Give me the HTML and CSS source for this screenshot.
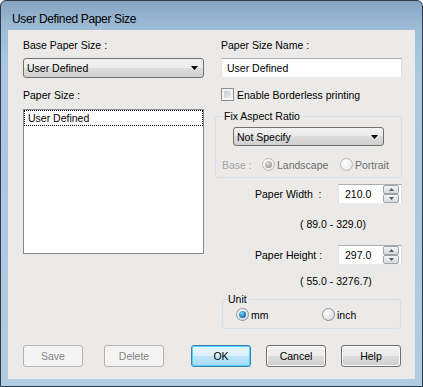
FILE: index.html
```html
<!DOCTYPE html>
<html>
<head>
<meta charset="utf-8">
<title>User Defined Paper Size</title>
<link rel="stylesheet" href="styles.css">
</head>
<body>
<div class="window">
  <div class="titlebar">User Defined Paper Size</div>
  <div class="client">
    <div class="main">
      <div class="col-left">
        <div class="label first">Base Paper Size :</div>
        <div class="combo wide">
          <span>User Defined</span>
          <svg class="arrow" width="7" height="4" viewBox="0 0 7 4"><path d="M0 0H7L3.5 4Z" fill="#000"/></svg>
        </div>
        <div class="label second">Paper Size :</div>
        <div class="listbox">
          <div class="item">User Defined</div>
        </div>
      </div>
      <div class="col-right">
        <div class="label first indent">Paper Size Name :</div>
        <div class="textbox">User Defined</div>
        <div class="check-row">
          <span class="checkbox"></span>
          <span>Enable Borderless printing</span>
        </div>
        <div class="group group-aspect">
          <div class="legend">Fix Aspect Ratio</div>
          <div class="combo narrow">
            <span>Not Specify</span>
            <svg class="arrow" width="7" height="4" viewBox="0 0 7 4"><path d="M0 0H7L3.5 4Z" fill="#000"/></svg>
          </div>
          <div class="base-row">
            <span class="base-label">Base :</span>
            <span class="radio-item landscape"><span class="radio disabled checked"></span><span>Landscape</span></span>
            <span class="radio-item"><span class="radio disabled"></span><span>Portrait</span></span>
          </div>
        </div>
        <div class="num-row row-width">
          <span class="num-label">Paper Width &nbsp;:</span>
          <div class="numbox">
            <span>210.0</span>
            <span class="spin">
              <span class="spin-btn"><svg width="5" height="3" viewBox="0 0 5 3"><path d="M0 3L2.5 0L5 3Z" fill="#4a5a78"/></svg></span>
              <span class="spin-btn"><svg width="5" height="3" viewBox="0 0 5 3"><path d="M0 0H5L2.5 3Z" fill="#4a5a78"/></svg></span>
            </span>
          </div>
        </div>
        <div class="range range-one">( 89.0 - 329.0)</div>
        <div class="num-row row-height">
          <span class="num-label">Paper Height :</span>
          <div class="numbox">
            <span>297.0</span>
            <span class="spin">
              <span class="spin-btn"><svg width="5" height="3" viewBox="0 0 5 3"><path d="M0 3L2.5 0L5 3Z" fill="#4a5a78"/></svg></span>
              <span class="spin-btn"><svg width="5" height="3" viewBox="0 0 5 3"><path d="M0 0H5L2.5 3Z" fill="#4a5a78"/></svg></span>
            </span>
          </div>
        </div>
        <div class="range range-two">( 55.0 - 3276.7)</div>
        <div class="group group-unit">
          <div class="legend legend-unit">Unit</div>
          <div class="unit-row">
            <span class="radio-item mm"><span class="radio checked"></span><span>mm</span></span>
            <span class="radio-item"><span class="radio"></span><span>inch</span></span>
          </div>
        </div>
      </div>
    </div>
    <div class="buttons">
      <div class="btn disabled">Save</div>
      <div class="btn disabled gap-delete">Delete</div>
      <div class="btn default gap-ok">OK</div>
      <div class="btn gap-small">Cancel</div>
      <div class="btn gap-small">Help</div>
    </div>
  </div>
</div>
</body>
</html>
```
FILE: styles.css
```css
* { box-sizing: border-box; }
html, body { margin: 0; padding: 0; background: #ffffff; }
body {
  font-family: "Liberation Sans", Arial, sans-serif;
  font-size: 10.5px;
  color: #000;
}

.window {
  width: 423px;
  height: 387px;
  border: 1px solid #2e3b48;
  border-radius: 6px 6px 0 0;
  background: linear-gradient(to bottom, #86a5c3 0px, #a0bdd8 29px, #abc8e0 70px, #b0cce3 100%);
  padding: 0 7px 7px 7px;
  display: flex;
  flex-direction: column;
  overflow: hidden;
}

.titlebar {
  height: 29px;
  flex: none;
  padding: 11px 0 0 4px;
  font-size: 12px;
  line-height: 14px;
  letter-spacing: -0.35px;
  color: #000;
  white-space: nowrap;
}

.client {
  flex: 1;
  background: #ebeae8;
  display: flex;
  flex-direction: column;
  padding-bottom: 12px;
}

.main { display: flex; }

.col-left {
  margin-left: 15px;
  width: 181px;
  display: flex;
  flex-direction: column;
}

.col-right {
  margin-left: 11px;
  width: 187px;
  display: flex;
  flex-direction: column;
}

.label {
  height: 13px;
  line-height: 13px;
  white-space: nowrap;
}
.first { margin-top: 9px; }
.second { margin-top: 11px; }
.indent { margin-left: 6px; }

.combo {
  border: 1px solid #707070;
  border-radius: 3px;
  background: linear-gradient(to bottom, #f2f2f2 0%, #ebebeb 50%, #dddddd 50%, #cfcfcf 100%);
  display: flex;
  align-items: center;
  padding-left: 3px;
  white-space: nowrap;
}
.combo .arrow { margin-left: auto; margin-right: 5px; }
.combo.wide { margin-top: 6px; height: 20px; }
.combo.narrow { margin-top: 4px; margin-left: 17px; width: 151px; height: 19px; }

.listbox {
  margin-top: 7px;
  height: 145px;
  border: 1px solid #828790;
  background: #fff;
}
.listbox .item {
  height: 16px;
  line-height: 14px;
  border: 1px dotted #000;
  padding-left: 3px;
  white-space: nowrap;
}

.textbox {
  margin-top: 6px;
  margin-left: 6px;
  width: 181px;
  height: 20px;
  border: 1px solid;
  border-color: #abadb3 #dbdfe6 #e3e9ef #e2e3ea;
  background: #fff;
  padding-left: 5px;
  line-height: 18px;
  white-space: nowrap;
}

.check-row {
  margin-top: 10px;
  margin-left: 6px;
  height: 13px;
  display: flex;
  align-items: center;
  gap: 3px;
  white-space: nowrap;
}
.checkbox {
  width: 13px;
  height: 13px;
  border: 1px solid #8e8f8f;
  background: linear-gradient(135deg, #babec4 0%, #e4e6e9 70%, #f2f3f4 100%);
  box-shadow: inset 0 0 0 2px #f4f4f4;
}

.group {
  border: 1px solid #d5dfe5;
  border-radius: 3px;
  display: flex;
  flex-direction: column;
}
.legend {
  align-self: flex-start;
  margin-top: -7px;
  margin-left: 6px;
  padding: 0 2px;
  height: 13px;
  line-height: 13px;
  background: #ebeae8;
  white-space: nowrap;
}
.group-aspect { margin-top: 15px; height: 62px; }
.group-unit { margin-top: 11px; margin-left: 7px; width: 179px; height: 30px; }
.legend-unit { margin-left: 3px; padding: 0 2px; }

.base-row {
  margin-top: 12px;
  height: 13px;
  padding-left: 6px;
  display: flex;
  align-items: center;
  white-space: nowrap;
  color: #6d6d6d;
}
.base-label { width: 40px; color: #a3a3a3; }

.radio-item { display: flex; align-items: center; gap: 2px; }
.landscape { width: 78px; }
.mm { width: 86px; }

.radio {
  width: 13px;
  height: 13px;
  border-radius: 50%;
  border: 1px solid #8e8f8f;
  background: radial-gradient(circle at 35% 30%, #ffffff 0%, #e9ebee 50%, #cfd3d8 100%);
  display: flex;
  align-items: center;
  justify-content: center;
}
.radio.checked::after {
  content: "";
  width: 7px;
  height: 7px;
  border-radius: 50%;
  background: radial-gradient(circle at 40% 35%, #8fe0ff 0%, #2f8dd0 45%, #0f4a7e 100%);
}
.radio.disabled {
  border-color: #b8b8b8;
  background: radial-gradient(circle at 35% 30%, #ffffff 0%, #f0f0f0 60%, #e2e2e2 100%);
}
.radio.disabled.checked::after {
  background: radial-gradient(circle at 40% 35%, #e6e6e6 0%, #a8a8a8 55%, #8a8a8a 100%);
}

.unit-row {
  margin-top: 2px;
  height: 13px;
  padding-left: 13px;
  display: flex;
  align-items: center;
  white-space: nowrap;
}

.num-row {
  margin-left: 40px;
  display: flex;
  align-items: center;
  white-space: nowrap;
}
.row-width { margin-top: 6px; }
.row-height { margin-top: 14px; }
.num-label { width: 83px; }
.numbox {
  width: 64px;
  height: 20px;
  border: 1px solid;
  border-color: #abadb3 #dbdfe6 #e3e9ef #e2e3ea;
  background: #fff;
  display: flex;
  align-items: center;
  padding-left: 6px;
}
.spin {
  margin-left: auto;
  margin-right: 2px;
  width: 16px;
  height: 18px;
  display: flex;
  flex-direction: column;
}
.spin-btn {
  flex: 1;
  border: 1px solid #9ea3a9;
  border-radius: 2px;
  background: linear-gradient(to bottom, #f6f6f6 0%, #e6e6e6 50%, #d8d8d8 100%);
  display: flex;
  align-items: center;
  justify-content: center;
}

.range {
  margin-left: 85px;
  height: 13px;
  line-height: 13px;
  white-space: nowrap;
}
.range-one { margin-top: 14px; }
.range-two { margin-top: 10px; }

.buttons {
  margin-top: auto;
  padding-left: 15px;
  display: flex;
}
.btn {
  width: 60px;
  height: 22px;
  border: 1px solid #707070;
  border-radius: 3px;
  background: linear-gradient(to bottom, #f2f2f2 0%, #ebebeb 50%, #dddddd 50%, #cfcfcf 100%);
  box-shadow: inset 0 0 0 1px #fcfcfc;
  display: flex;
  align-items: center;
  justify-content: center;
  white-space: nowrap;
}
.btn.disabled {
  border-color: #adb2b5;
  background: #f4f4f4;
  box-shadow: none;
  color: #838383;
}
.btn.default {
  border-color: #3c7fb1;
  background: linear-gradient(to bottom, #eaf6fd 0%, #d9f0fc 50%, #bee6fd 50%, #a7d9f5 100%);
  box-shadow: inset 0 0 0 1px #48d8fb;
}
.gap-delete { margin-left: 21px; }
.gap-ok { margin-left: 27px; }
.gap-small { margin-left: 15px; }
```
